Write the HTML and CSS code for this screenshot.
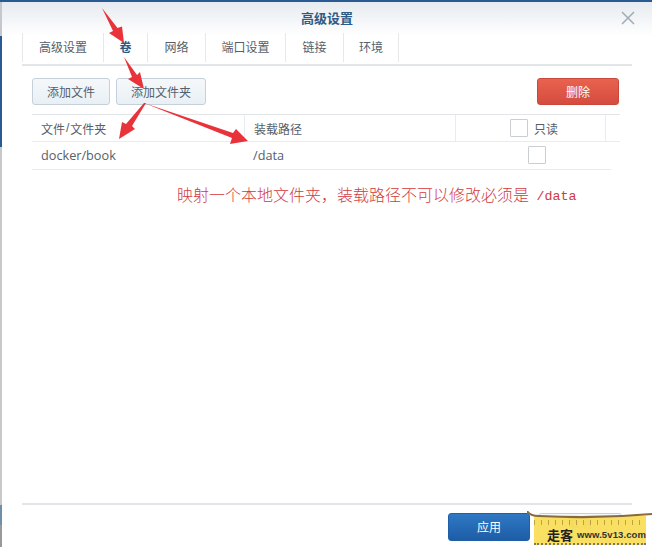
FILE: index.html
```html
<!DOCTYPE html>
<html lang="zh-CN">
<head>
    <meta charset="UTF-8">
    <meta name="viewport" content="width=device-width, initial-scale=1.0">
    <title>高级设置</title>
    <link rel="stylesheet" href="styles.css">
</head>
<body>
    <div class="dialog">
        <div class="dialog-header">
            <h2>高级设置</h2>
            <svg class="close-icon" width="14" height="14" viewBox="0 0 14 14"><path d="M1 1L13 13M13 1L1 13" stroke="#a3adb5" stroke-width="1.6" fill="none"/></svg>
        </div>

        <div class="tabs">
            <div class="tab">高级设置</div>
            <div class="tab tab-active">卷</div>
            <div class="tab">网络</div>
            <div class="tab">端口设置</div>
            <div class="tab">链接</div>
            <div class="tab">环境</div>
        </div>

        <div class="toolbar">
            <button class="btn">添加文件</button>
            <button class="btn btn-wide">添加文件夹</button>
            <button class="btn btn-delete">删除</button>
        </div>

        <div class="table">
            <div class="row row-head">
                <div class="cell col-file">文件<span class="slash">/</span>文件夹</div>
                <div class="cell col-path">装载路径</div>
                <div class="cell col-read"><span class="check"></span>只读</div>
                <div class="cell col-end"></div>
            </div>
            <div class="row row-body">
                <div class="cell col-file">docker/book</div>
                <div class="cell col-path">/data</div>
                <div class="cell col-read"><span class="check"></span></div>
            </div>
        </div>

        <p class="note">映射一个本地文件夹，装载路径不可以修改必须是 <span class="note-mono">/data</span></p>

        <div class="dialog-footer">
            <button class="btn-apply">应用</button>
            <button class="btn btn-cancel">取消</button>
        </div>
    </div>

    <!-- red arrows drawn over the screenshot -->
    <svg class="arrows" width="652" height="547" viewBox="0 0 652 547">
        <path d="M102 8L117.5 28L122 26.5L124 43L109 33L113 31Z"/>
        <path d="M124 57L137 75L140 72L144 89L128 79L132 77Z"/>
        <path d="M146 103L132 126L135 129L119 139L122 122L126 124L144 103Z"/>
        <path d="M144 103L233 133L236 129L248 141L230 144L232 138Z"/>
    </svg>

    <div class="stamp">
        <div class="stamp-card">
            <span class="stamp-text">走客</span>
            <span class="stamp-url">www.5v13.com</span>
        </div>
        <svg class="stamp-bar" width="125" height="10" viewBox="0 0 125 10"><path d="M0 0Q3 5 12 5Q70 8 125 3" stroke="#8a6a3c" stroke-width="2" fill="none"/></svg>
    </div>
</body>
</html>
```

FILE: styles.css
```css
* {
    box-sizing: border-box;
}

body {
    margin: 0;
    width: 652px;
    height: 547px;
    overflow: hidden;
    position: relative;
    font-family: "Liberation Sans", "Noto Sans CJK SC", sans-serif;
    font-size: 12px;
    color: #56606a;
    background: linear-gradient(#2a5a94 0, #2a5a94 2px, #c4c8cc 2px, #c4c8cc 36px, #2a5a94 36px, #2a5a94 147px, #c8c8c8 147px, #c8c8c8 505px, #6f8ea8 505px, #6f8ea8 525px, #999 525px) no-repeat 0 0 / 2px 100%;
}

.dialog {
    height: 547px;
    margin-left: 2px;
    padding: 0 20px;
    border-top: 2px solid #2a5a94;
    display: flex;
    flex-direction: column;
    background: linear-gradient(#e6ebf0 0, #fff 34px);
}

.dialog-header {
    height: 31px;
    margin: 0 -20px;
    display: flex;
    align-items: center;
    justify-content: center;
    position: relative;
}

h2 {
    margin: 0;
    font-size: 13px;
    font-weight: bold;
    color: #2f5a85;
}

.close-icon {
    position: absolute;
    top: 9px;
    right: 17px;
}

.tabs {
    height: 33px;
    display: grid;
    grid-template-columns: 81px 44px 58px 80px 58px 56px;
    border-bottom: 2px solid #e3e6e8;
}

.tab {
    padding-bottom: 2px;
    margin-bottom: 2px;
    display: flex;
    align-items: center;
    justify-content: center;
    border-left: 1px solid #e6e9ec;
}

.tab:last-child {
    border-right: 1px solid #e6e9ec;
}

.tab-active {
    color: #2f5a85;
    font-weight: bold;
}

.toolbar {
    margin: 12px 13px 9px 10px;
    display: flex;
    gap: 6px;
}

.btn {
    width: 78px;
    height: 27px;
    padding: 0;
    font: inherit;
    color: #56606a;
    border: 1px solid #c5d0da;
    border-radius: 3px;
    background: linear-gradient(#f5f8fa, #e9f0f5);
}

.btn-wide {
    width: 90px;
}

.btn-delete {
    width: 82px;
    margin-left: auto;
    color: #fff;
    border-color: #c9483c;
    background: linear-gradient(#e8634f, #d54c3f);
}

.table {
    margin-left: 10px;
    margin-right: 12px;
}

.row {
    height: 28px;
    display: flex;
    border-bottom: 1px solid #e9ecee;
}

.row-head {
    border-top: 1px solid #e3e6e8;
}

.row-body {
    margin-right: 9px;
    padding-bottom: 1px;
    font-family: "Open Sans", sans-serif;
    font-size: 12.7px;
}

.cell {
    display: flex;
    align-items: center;
    padding-left: 9px;
}

.slash {
    margin: 0 1px;
}

.col-file {
    width: 212px;
}

.col-path {
    width: 211px;
}

.row-head .col-path,
.row-head .col-read,
.row-head .col-end {
    border-left: 1px solid #e9ecee;
}

.col-read {
    width: 150px;
    padding-left: 54px;
    gap: 6px;
}

.row-body .col-read {
    padding-left: 73px;
}

.col-end {
    flex: 1;
}

.check {
    width: 18px;
    height: 18px;
    border: 1px solid #c9ced2;
    border-radius: 1px;
    background-color: #fff;
}

.note {
    margin: 16px 0 0 155px;
    font-size: 16px;
    line-height: 20px;
    font-weight: 300;
    color: #d23a3e;
}

.note-mono {
    margin-left: 3px;
    position: relative;
    top: -1px;
    font-family: "Liberation Mono", monospace;
    font-size: 13.33px;
}

.dialog-footer {
    margin-top: auto;
    height: 44px;
    padding: 8px 0 0 426px;
    display: flex;
    gap: 8px;
    border-top: 2px solid #e3e6e8;
}

.btn-apply {
    width: 82px;
    height: 28px;
    padding: 0 0 2px;
    font: inherit;
    color: #fff;
    border: 1px solid #1f5fa8;
    border-radius: 3px;
    background: linear-gradient(#2f78c4, #1d5da6);
}

.btn-cancel {
    width: 84px;
    height: 28px;
    padding-bottom: 12px;
}

.arrows {
    position: absolute;
    top: 0;
    left: 0;
    fill: #e8333a;
}

.stamp {
    position: absolute;
    left: 527px;
    top: 511px;
    width: 125px;
    height: 36px;
}

.stamp-bar {
    position: absolute;
    top: 0;
    left: 0;
}

.stamp-card {
    margin: 5px 0 0 7px;
    width: 112px;
    height: 29px;
    padding: 9px 0 0 13px;
    display: flex;
    align-items: center;
    gap: 4px;
    white-space: nowrap;
    color: #222;
    background-color: rgba(250, 222, 90, 0.95);
    background-image: repeating-linear-gradient(90deg, rgba(130, 100, 40, 0.5) 0 1px, transparent 1px 7px);
    background-size: 100% 5px;
    background-position: 0 4px;
    background-repeat: no-repeat;
    border-bottom: 2px dotted #777;
}

.stamp-text {
    font-size: 13px;
    font-weight: bold;
}

.stamp-url {
    font-size: 9.5px;
    font-weight: bold;
    letter-spacing: 0.1px;
    color: #333;
}
```
